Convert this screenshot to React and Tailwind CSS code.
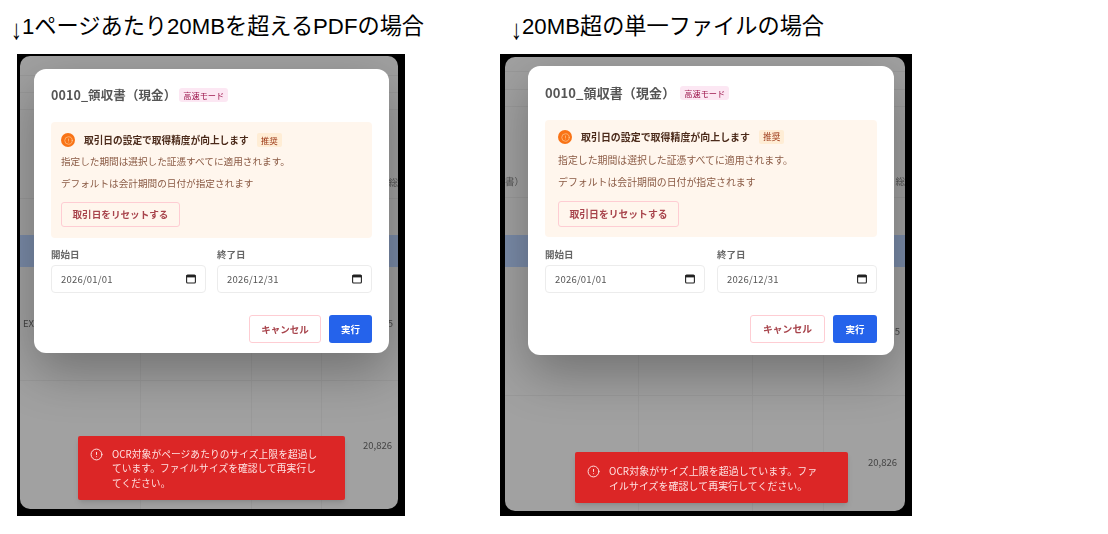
import { CircleAlert } from 'lucide-react';

const UI_FONT = "font-['Noto_Sans_CJK_JP','Noto_Sans',sans-serif]";

function CalendarIcon() {
  return (
    <svg width="10" height="10" viewBox="0 0 10 10" className="shrink-0">
      <rect x="0.6" y="1" width="8.8" height="8" rx="1" fill="none" stroke="#222" strokeWidth="1.1" />
      <rect x="0.6" y="1" width="8.8" height="2.4" fill="#222" />
    </svg>
  );
}

function TipIcon() {
  return (
    <span className="flex h-[14px] w-[14px] shrink-0 items-center justify-center rounded-full bg-[#f97316]">
      <CircleAlert size={9} strokeWidth={1.6} className="text-[#fed7aa]" />
    </span>
  );
}

function DateField({ label, value, box }) {
  return (
    <div className={box}>
      <div className="mb-[4px] h-[14px] text-[9.5px] leading-[14px] font-bold text-[#666]">{label}</div>
      <div className="flex h-[28px] items-center justify-between rounded-[4px] border border-[#ececec] bg-white pr-[9px] pl-[9px] text-[9.5px] text-[#555]">
        <span className="tracking-[0.2px]">{value}</span>
        <CalendarIcon />
      </div>
    </div>
  );
}

function Screenshot({ s }) {
  return (
    <div className={s.frame}>
      <div className={`relative h-full w-full overflow-hidden rounded-[10px] bg-[#a1a1a1] text-[9.5px] text-[#444] blur-[0.4px] ${UI_FONT}`}>
        {/* table behind the dialog */}
        <div className="flex h-full flex-col">
          <div className={s.rowA} />
          <div className={s.rowB} />
          <div className={s.rowB2} />
          <div className={`${s.cols} ${s.rowHead} border-b border-[#999]`}>
            <div className="flex items-end overflow-hidden pb-[9px] text-[#555]">{s.headLeft}</div>
            <div />
            <div />
            <div className="flex items-end justify-end overflow-hidden pb-[9px] text-[#555]">総</div>
          </div>
          <div className={s.rowGap} />
          <div className={s.band} />
          <div className={`${s.cols} ${s.rowData} border-b border-[#999]`}>
            <div className="flex items-center border-r border-[#9a9a9a] pl-[3px]">{s.dataLeft}</div>
            <div className="border-r border-[#9a9a9a]" />
            <div className="border-r border-[#9a9a9a]" />
            <div className="flex items-center justify-end pr-[5px]">5</div>
          </div>
          <div className={`${s.cols} min-h-0 flex-1`}>
            <div className="border-r border-[#9a9a9a]" />
            <div className="border-r border-[#9a9a9a]" />
            <div className="border-r border-[#9a9a9a]" />
            <div className={s.totalCell}>20,826</div>
          </div>
        </div>

        {/* dialog */}
        <div className={s.modal}>
          <div className={s.titleRow}>
            <span className={s.title}>0010_領収書（現金）</span>
            <span className="rounded-[3px] bg-[#fce7f3] px-[4px] py-[1px] text-[8.2px] leading-[12px] text-[#9d174d]">高速モード</span>
          </div>

          <div className={s.tip}>
            <div className="flex items-center">
              <TipIcon />
              <span className={s.tipTitle}>取引日の設定で取得精度が向上します</span>
              <span className={s.tipBadge}>推奨</span>
            </div>
            <p className={s.tipLine1}>指定した期間は選択した証憑すべてに適用されます。</p>
            <p className={s.tipLine2}>デフォルトは会計期間の日付が指定されます</p>
            <button type="button" className={s.resetBtn}>取引日をリセットする</button>
          </div>

          <div className={s.fields}>
            <DateField label="開始日" value="2026/01/01" box={s.field} />
            <DateField label="終了日" value="2026/12/31" box={s.field} />
          </div>

          <div className="mt-[22px] flex justify-end gap-[8px]">
            <button type="button" className={s.cancelBtn}>キャンセル</button>
            <button type="button" className={s.runBtn}>実行</button>
          </div>
        </div>

        {/* error toast */}
        <div className={s.toast}>
          <CircleAlert size={13} strokeWidth={1.8} className="mt-[1px] shrink-0" />
          <p className={s.toastText}>{s.message}</p>
        </div>
      </div>
    </div>
  );
}

const left = {
  frame: 'ml-[6px] h-[462px] w-[388px] bg-black pt-[2px] pr-[7px] pb-[7px] pl-[3px]',
  cols: 'grid grid-cols-[121px_111px_70px_1fr]',
  rowA: 'h-[20px] shrink-0 border-b border-[#999]',
  rowB: 'h-[17px] shrink-0 border-b border-[#999]',
  rowB2: 'h-[17px] shrink-0 border-b border-[#999]',
  rowHead: 'h-[89px] shrink-0',
  rowGap: 'h-[36px] shrink-0',
  band: 'h-[32px] shrink-0 bg-[#7a8ba8]',
  rowData: 'h-[114px] shrink-0',
  headLeft: '',
  dataLeft: 'EX',
  totalCell: 'flex items-center justify-end pr-[6px]',
  modal: 'absolute top-[13px] left-[14px] h-[284px] w-[355px] rounded-[12px] bg-white px-[17px] pt-[17px] shadow-[0_18px_50px_rgba(0,0,0,0.3)]',
  titleRow: 'flex items-center gap-[3px]',
  title: 'text-[12.5px] leading-[18px] font-bold tracking-[0.1px] text-[#555]',
  tip: 'mt-[18px] h-[116px] rounded-[4px] bg-[#fff6ed] px-[10px] pt-[11px]',
  tipTitle: 'ml-[9px] text-[9.7px] leading-[14px] font-bold text-[#4b2a1a]',
  tipBadge: 'ml-[8px] rounded-[2px] bg-[#ffedd5] px-[4px] text-[8.5px] leading-[14px] text-[#9a3412]',
  tipLine1: 'mt-[7px] text-[9.65px] leading-[14px] text-[#8a5a44]',
  tipLine2: 'mt-[8px] text-[9.65px] leading-[14px] text-[#8a5a44]',
  resetBtn: 'mt-[12px] h-[25px] w-[119px] rounded-[3px] border border-[#fecdd3] text-[9.6px] font-bold text-[#a8444c]',
  fields: 'mt-[9px] flex justify-between',
  field: 'w-[155px]',
  cancelBtn: 'h-[28px] w-[72px] rounded-[3px] border border-[#fecdd3] text-[9.5px] font-bold text-[#a8444c]',
  runBtn: 'h-[28px] w-[43px] rounded-[3px] bg-[#2563eb] text-[9.5px] font-bold text-white',
  toast: 'absolute top-[380px] left-[58px] flex h-[64px] w-[267px] gap-[9px] rounded-[2px] bg-[#dc2626] pt-[11px] pr-[26px] pl-[12px] text-[#fee2e2] shadow-md',
  toastText: 'text-[9.7px] leading-[14.3px] tracking-[0.1px]',
  message: 'OCR対象がページあたりのサイズ上限を超過しています。ファイルサイズを確認して再実行してください。',
};

const right = {
  ...left,
  frame: 'h-[462px] w-[412px] bg-black pt-[3px] pr-[7px] pb-[5px] pl-[5px]',
  cols: 'grid grid-cols-[134px_114px_71px_1fr]',
  rowA: 'h-[15px] shrink-0 border-b border-[#999]',
  rowB: 'h-[18px] shrink-0 border-b border-[#999]',
  rowB2: 'h-[17px] shrink-0 border-b border-[#999]',
  rowHead: 'h-[91px] shrink-0',
  rowGap: 'h-[37px] shrink-0',
  rowData: 'h-[129px] shrink-0',
  headLeft: '書）',
  dataLeft: '',
  totalCell: 'flex items-center justify-end pt-[18px] pr-[8px]',
  modal: 'absolute top-[9px] left-[23px] h-[289px] w-[366px] rounded-[12px] bg-white px-[17px] pt-[18px] shadow-[0_18px_50px_rgba(0,0,0,0.3)]',
  titleRow: 'flex items-center gap-[5px]',
  title: 'text-[13px] leading-[18px] font-bold tracking-[0.1px] text-[#555]',
  tip: 'mt-[18px] h-[117px] rounded-[4px] bg-[#fff6ed] px-[13px] pt-[10px]',
  tipTitle: 'ml-[9px] text-[9.95px] leading-[14px] font-bold text-[#4b2a1a]',
  tipBadge: 'ml-[9px] rounded-[2px] bg-[#ffedd5] px-[4px] text-[8.7px] leading-[14px] text-[#9a3412]',
  tipLine1: 'mt-[9px] text-[9.9px] leading-[14px] text-[#8a5a44]',
  tipLine2: 'mt-[8px] text-[9.9px] leading-[14px] text-[#8a5a44]',
  resetBtn: 'mt-[12px] h-[26px] w-[121px] rounded-[3px] border border-[#fecdd3] text-[9.8px] font-bold text-[#a8444c]',
  fields: 'mt-[10px] flex justify-between',
  field: 'w-[160px]',
  cancelBtn: 'h-[28px] w-[75px] rounded-[3px] border border-[#fecdd3] text-[9.8px] font-bold text-[#a8444c]',
  runBtn: 'h-[28px] w-[44px] rounded-[3px] bg-[#2563eb] text-[9.5px] font-bold text-white',
  toast: 'absolute top-[395px] left-[70px] flex h-[51px] w-[273px] gap-[9px] rounded-[2px] bg-[#dc2626] pt-[12px] pr-[26px] pl-[12px] text-[#fee2e2] shadow-md',
  toastText: 'text-[9.9px] leading-[15px] tracking-[0.1px]',
  message: 'OCR対象がサイズ上限を超過しています。ファイルサイズを確認して再実行してください。',
};

function Arrow() {
  return <span className="inline-block w-[11px] translate-y-[3px] scale-y-125 text-center">↓</span>;
}

export default function App() {
  const heading = "flex h-[54px] items-center text-[22.2px] text-black font-['Liberation_Sans','Noto_Sans_CJK_JP',sans-serif]";
  return (
    <div className="flex min-h-[534px] w-[1108px] bg-white">
      <div className="w-[500px] shrink-0 pl-[11px]">
        <h2 className={heading}><Arrow />1ページあたり20MBを超えるPDFの場合</h2>
        <Screenshot s={left} />
      </div>
      <div>
        <h2 className={`${heading} ml-[11px]`}><Arrow />20MB超の単一ファイルの場合</h2>
        <Screenshot s={right} />
      </div>
    </div>
  );
}
